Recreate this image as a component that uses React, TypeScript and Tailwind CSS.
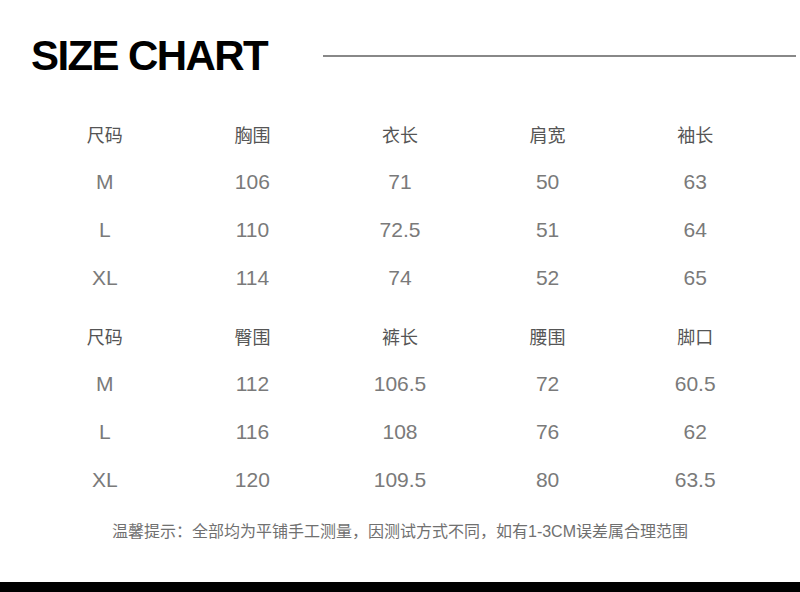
import React from 'react';

const tops = {
  head: ['尺码', '胸围', '衣长', '肩宽', '袖长'],
  rows: [
    ['M', '106', '71', '50', '63'],
    ['L', '110', '72.5', '51', '64'],
    ['XL', '114', '74', '52', '65'],
  ],
};

const pants = {
  head: ['尺码', '臀围', '裤长', '腰围', '脚口'],
  rows: [
    ['M', '112', '106.5', '72', '60.5'],
    ['L', '116', '108', '76', '62'],
    ['XL', '120', '109.5', '80', '63.5'],
  ],
};

const SizeTable: React.FC<{ head: string[]; rows: string[][] }> = ({ head, rows }) => (
  <div className="flex flex-col">
    <div className="grid grid-cols-5 h-[48px] items-center pt-[4px]">
      {head.map((h, i) => (
        <div key={i} className="text-center text-[18px] text-[#555]">
          {h}
        </div>
      ))}
    </div>
    {rows.map((r, i) => (
      <div key={i} className="grid grid-cols-5 h-[48px] items-center">
        {r.map((c, j) => (
          <div key={j} className="text-center text-[21px] text-[#7a7a7a]">
            {c}
          </div>
        ))}
      </div>
    ))}
  </div>
);

export default function App() {
  return (
    <div
      className="w-[800px] h-[592px] bg-white flex flex-col overflow-hidden"
      style={{ fontFamily: '"Liberation Sans", "Noto Sans CJK SC", sans-serif' }}
    >
      <div className="flex items-center h-[56px] mt-[28px] pl-[31px] pr-[4px] gap-[56px]">
        <h1 className="text-[42px] font-bold text-black leading-none tracking-[-1.6px]">
          SIZE CHART
        </h1>
        <div className="flex-1 h-[2px] bg-[#888]" />
      </div>

      <div className="px-[31px] mt-[26px]">
        <SizeTable head={tops.head} rows={tops.rows} />
        <div className="h-[10px]" />
        <SizeTable head={pants.head} rows={pants.rows} />
      </div>

      <p className="mt-[16px] text-center text-[16px] text-[#707070]">
        温馨提示：全部均为平铺手工测量，因测试方式不同，如有1-3CM误差属合理范围
      </p>

      <div className="mt-auto h-[10px] bg-black" />
    </div>
  );
}
